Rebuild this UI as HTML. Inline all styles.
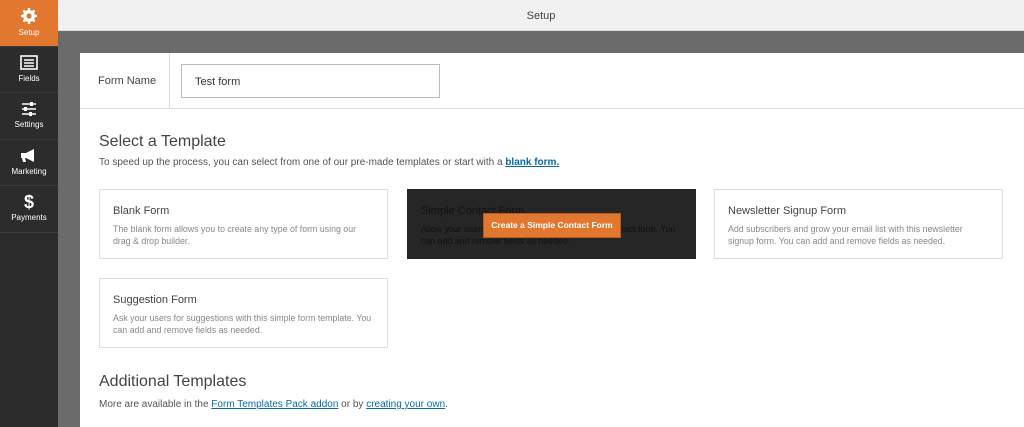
<!DOCTYPE html><html><head><style>
*{margin:0;padding:0;box-sizing:border-box}
body{width:1024px;height:427px;overflow:hidden;font-family:"Liberation Sans",sans-serif;background:#6b6b6b;position:relative}
.sb{position:absolute;left:0;top:0;width:58px;height:427px;background:#2c2c2c}
.it{height:46.5px;border-bottom:1px solid #3c3c3c;color:#fff;font-size:8px;text-align:center;padding-top:8px}
.it svg{display:block;margin:0 auto 4px}
.it.a{background:#e27730}
.top{position:absolute;left:58px;top:0;right:0;height:31px;background:#f1f1f1;border-bottom:1px solid #ddd;text-align:center;font-size:11px;color:#444;line-height:33px}
.pn{position:absolute;left:80px;top:53px;right:0;bottom:0;background:#fff}
.fn{height:56px;border-bottom:1px solid #ddd;position:relative}
.fn .l{position:absolute;left:18px;top:22px;font-size:11px;color:#444}
.fn .v{position:absolute;left:89px;top:0;bottom:0;border-left:1px solid #ddd}
.fn .in{position:absolute;left:101px;top:11px;width:259px;height:34px;border:1px solid #bbb;font-size:11px;color:#333;padding:11px 13px}
h2{position:absolute;font-weight:normal;font-size:16px;color:#444}
.p{position:absolute;font-size:10px;color:#555}
.p a{color:#066aab}
.c{position:absolute;width:289px;height:70px;border:1px solid #ddd;padding:15px 13px}
.c b{display:block;font-weight:normal;font-size:11px;color:#444;margin-bottom:6px}
.c span{display:block;font-size:8.8px;color:#888;line-height:12px}
</style></head><body>
<div class="sb">
<div class="it a"><svg width="16" height="16" viewBox="0 0 16 16"><path fill="#fff" d="M7 0h2l.4 2.2 1.6.7 1.9-1.3 1.4 1.4-1.3 1.9.7 1.6L16 7v2l-2.2.4-.7 1.6 1.3 1.9-1.4 1.4-1.9-1.3-1.6.7L9 16H7l-.4-2.2-1.6-.7-1.9 1.3-1.4-1.4 1.3-1.9-.7-1.6L0 9V7l2.2-.4.7-1.6-1.3-1.9 1.4-1.4 1.9 1.3 1.6-.7z"/><circle cx="8" cy="8" r="2.6" fill="#e27730"/></svg>Setup</div>
<div class="it"><svg width="18" height="15" viewBox="0 0 18 15"><rect x="1" y="1" width="16" height="13" fill="none" stroke="#fff" stroke-width="1.6"/><path d="M4 5h10M4 8h10M4 11h10" stroke="#fff" stroke-width="1.5"/></svg>Fields</div>
<div class="it"><svg width="16" height="15" viewBox="0 0 16 15"><path d="M1 3h14M1 8h14M1 13h14" stroke="#fff" stroke-width="1.5"/><rect x="9" y="1" width="3" height="4" fill="#fff"/><rect x="3" y="6" width="3" height="4" fill="#fff"/><rect x="8" y="11" width="3" height="4" fill="#fff"/></svg>Settings</div>
<div class="it"><svg width="18" height="15" viewBox="0 0 18 15"><path d="M1 5h5l8-4v13l-8-4H5l1 4H3l-1-4H1z" fill="#fff"/></svg>Marketing</div>
<div class="it"><div style="font-size:18px;font-weight:bold;line-height:16px;margin-bottom:3px">$</div>Payments</div>
</div>
<div class="top">Setup</div>
<div class="pn">
<div class="fn"><div class="l">Form Name</div><div class="v"></div><div class="in">Test form</div></div>
<h2 style="left:19px;top:80px">Select a Template</h2>
<div class="p" style="left:19px;top:104px">To speed up the process, you can select from one of our pre-made templates or start with a <a><u><b>blank form.</b></u></a></div>
<div class="c" style="left:19px;top:136px"><b>Blank Form</b><span>The blank form allows you to create any type of form using our drag &amp; drop builder.</span></div>
<div class="c" style="left:327px;top:136px;background:#262626;border-color:#262626"><b style="color:#111">Simple Contact Form</b><span style="color:#111">Allow your users to contact you with this simple contact form. You can add and remove fields as needed.</span>
<div style="position:absolute;left:75px;top:23px;width:138px;height:25px;background:#e27730;border:1px solid #b85a1c;color:#fff;font-size:8.5px;font-weight:bold;text-align:center;line-height:23px">Create a Simple Contact Form</div></div>
<div class="c" style="left:634px;top:136px"><b>Newsletter Signup Form</b><span>Add subscribers and grow your email list with this newsletter signup form. You can add and remove fields as needed.</span></div>
<div class="c" style="left:19px;top:225px"><b>Suggestion Form</b><span>Ask your users for suggestions with this simple form template. You can add and remove fields as needed.</span></div>
<h2 style="left:19px;top:320px">Additional Templates</h2>
<div class="p" style="left:19px;top:346px">More are available in the <a><u>Form Templates Pack addon</u></a> or by <a><u>creating your own</u></a>.</div>
</div>
</body></html>
